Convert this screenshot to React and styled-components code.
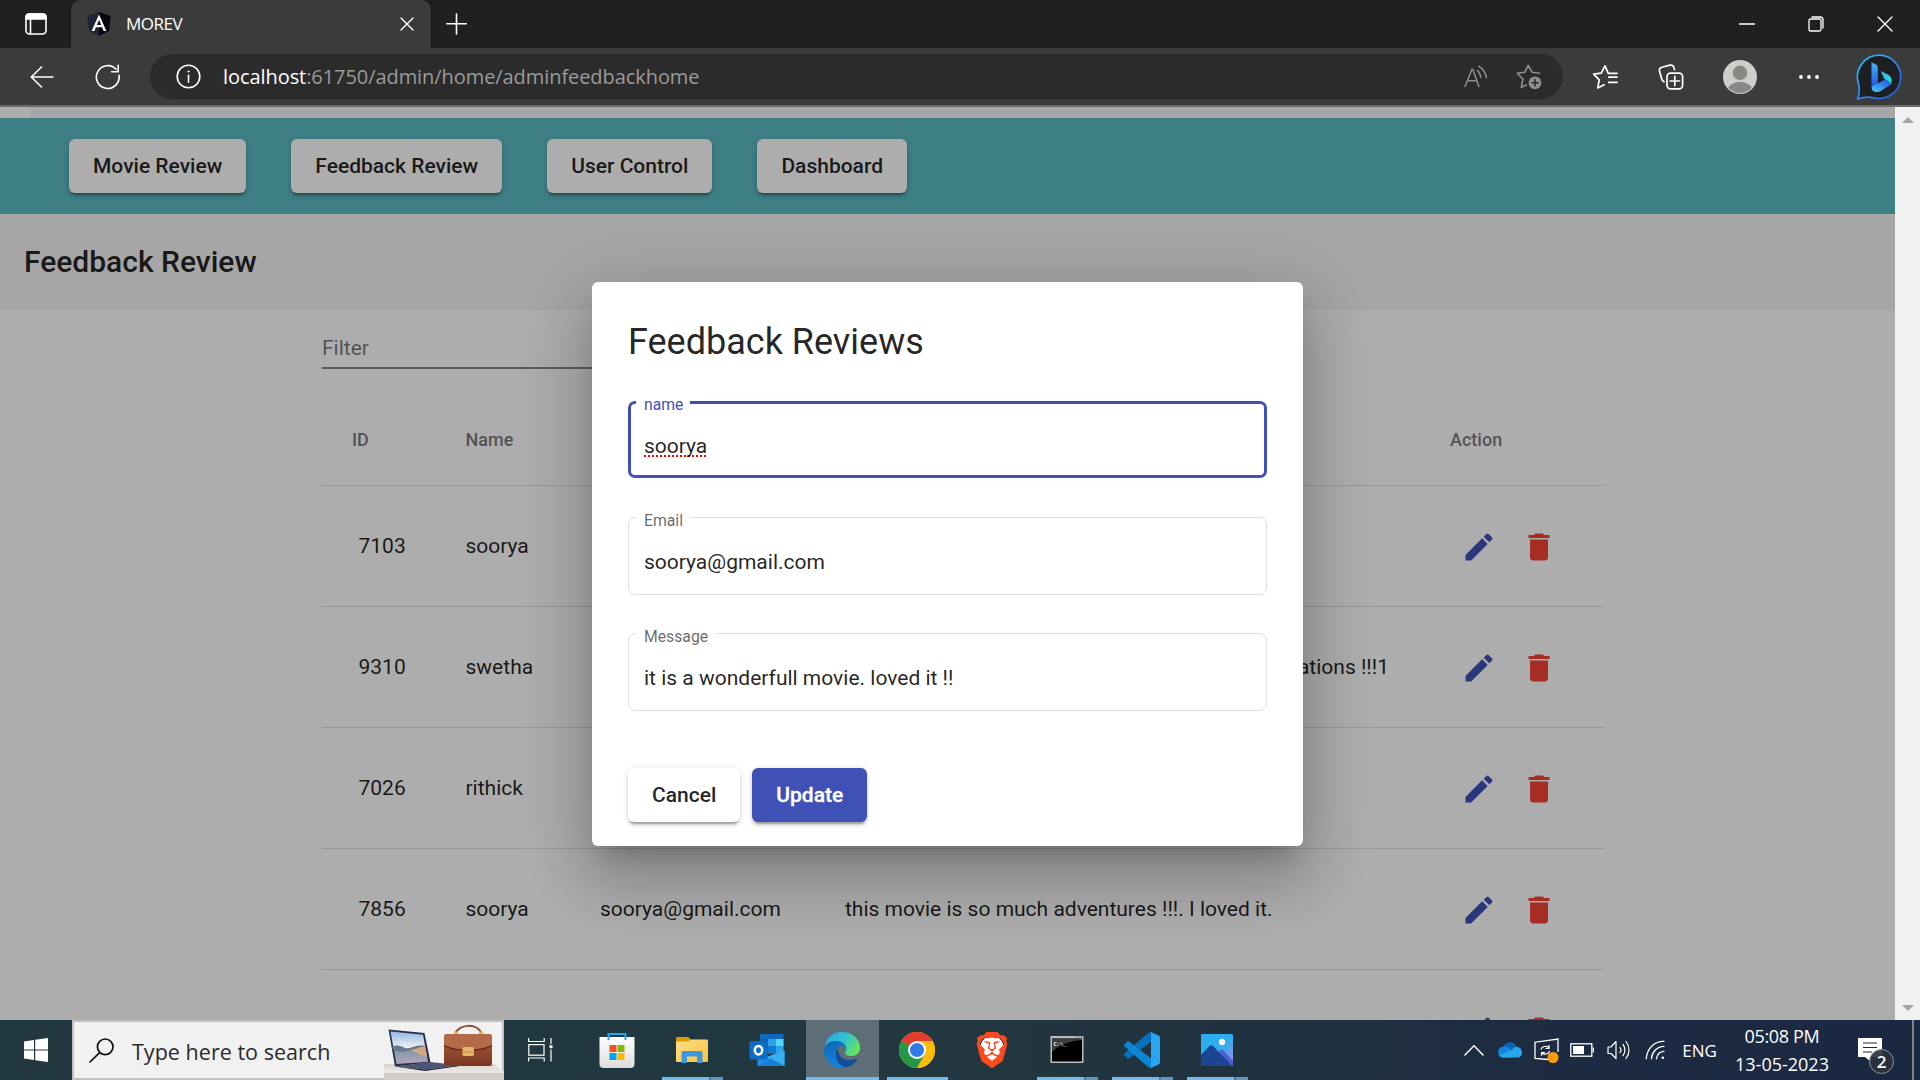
import React from "react";
import styled, { createGlobalStyle, css } from "styled-components";
import { SiBrave } from "react-icons/si";

const ui = `"Open Sans", "Noto Sans", sans-serif`;

const GlobalStyle = createGlobalStyle`
  * { box-sizing: border-box; }
  body { margin: 0; background: #202020; overflow: hidden; }
  svg { display: block; flex: none; }
`;

const Screen = styled.div`
  width: 1920px;
  height: 1080px;
  display: flex;
  flex-direction: column;
  overflow: hidden;
  font-family: Roboto, sans-serif;
`;

const Slot = styled.div`
  width: ${(p) => p.$w}px;
  height: 100%;
  flex: none;
  display: flex;
  align-items: center;
  justify-content: center;
  padding-right: ${(p) => p.$pr || 0}px;
`;

/* ---------- browser chrome ---------- */

const TabStrip = styled.div`
  height: 48px;
  flex: none;
  display: flex;
  background: #202020;
  color: #fff;
`;

const Tab = styled.div`
  width: 360px;
  padding: 0 17px 0 16px;
  display: flex;
  align-items: center;
  gap: 15px;
  background: #3b3b3b;
  border-radius: 9px 9px 0 0;
  box-shadow: 0 0 3px rgba(0, 0, 0, 0.6);
`;

const TabTitle = styled.span`
  flex: 1;
  font: 17px/24px ${ui};
  letter-spacing: -0.5px;
  padding-bottom: 1px;
`;

const WindowButtons = styled.div`
  margin-left: auto;
  display: flex;
`;

const Toolbar = styled.div`
  height: 59px;
  flex: none;
  display: flex;
  padding-left: 9px;
  background: #3b3b3b;
  border-bottom: 2px solid #6b6b6b;
  color: #fff;
`;

const AddressBar = styled.div`
  width: 1413px;
  height: 45px;
  margin: 6px 9px 0;
  padding: 0 8px 0 15px;
  display: flex;
  align-items: center;
  border-radius: 23px;
  background: #2b2b2b;
`;

const Url = styled.div`
  flex: 1;
  padding-left: 10px;
  font: 20px/28px ${ui};
  letter-spacing: -0.07px;
  color: #9a9a9a;
  b { font-weight: 400; color: #fff; }
`;

/* ---------- web page ---------- */

const Viewport = styled.div`
  height: 913px;
  flex: none;
  display: flex;
`;

const Page = styled.div`
  width: 1895px;
  position: relative;
  overflow: hidden;
  background: #fff;
  color: rgba(0, 0, 0, 0.87);
`;

const ScrollTrack = styled.div`
  flex: 1;
  display: flex;
  flex-direction: column;
  justify-content: space-between;
  align-items: center;
  padding: 10px 0 9px;
  background: #f1f1f1;
`;

const TopStrip = styled.div`
  height: 11px;
  margin-left: 30px;
  background: #f6f7fa;
`;

const NavBar = styled.nav`
  height: 96px;
  padding-left: 69px;
  display: flex;
  align-items: center;
  gap: 45px;
  background: #5abbc4;
`;

const Button = styled.button`
  height: 54px;
  padding: 0 24px;
  border: 0;
  border-radius: 6px;
  font: 500 21px/54px Roboto, sans-serif;
  white-space: nowrap;
  color: rgba(0, 0, 0, 0.87);
  background: #fff;
  box-shadow: 0 4.5px 1.5px -3px rgba(0, 0, 0, 0.2), 0 3px 3px rgba(0, 0, 0, 0.14),
    0 1.5px 7.5px rgba(0, 0, 0, 0.12);
  ${(p) =>
    p.$primary &&
    css`
      color: #fff;
      background: #3f51b5;
      -webkit-text-stroke: 0.3px #fff;
    `}
`;

const PageHeader = styled.header`
  height: 96px;
  padding: 0 0 2px 24px;
  display: flex;
  align-items: center;
  font-size: 30px;
  font-weight: 500;
  background: #f5f5f5;
`;

const Content = styled.main`
  width: 1283px;
  margin-left: 322px;
`;

const Filter = styled.div`
  width: 540px;
  height: 59px;
  padding-top: 18px;
  display: flex;
  align-items: center;
  font-size: 21px;
  color: rgba(0, 0, 0, 0.54);
  border-bottom: 2px solid rgba(0, 0, 0, 0.46);
`;

const Row = styled.div`
  height: 121px;
  display: grid;
  grid-template-columns: 143.5px 134.5px 245px 605px 1fr;
  align-items: center;
  border-bottom: 1px solid rgba(0, 0, 0, 0.12);
  font-size: 21px;
  white-space: nowrap;
`;

const HeadRow = styled(Row)`
  height: 91px;
  margin-top: 26px;
  padding-bottom: 2px;
  font-size: 18px;
  font-weight: 500;
  color: rgba(0, 0, 0, 0.54);
`;

const Cell = styled.div`
  padding-left: ${(p) => p.$indent || 0}px;
`;

const Actions = styled.div`
  display: flex;
  gap: 24px;
  padding: 2px 0 0 11px;
`;

const Backdrop = styled.div`
  position: absolute;
  inset: 0;
  display: flex;
  align-items: flex-start;
  justify-content: center;
  padding-top: 175px;
  background: rgba(0, 0, 0, 0.32);
`;

const Dialog = styled.div`
  width: 711px;
  height: 564px;
  padding: 36px;
  border-radius: 6px;
  background: #fff;
  box-shadow: 0 16.5px 22.5px -10.5px rgba(0, 0, 0, 0.2), 0 36px 57px 4.5px rgba(0, 0, 0, 0.14),
    0 13.5px 69px 12px rgba(0, 0, 0, 0.12);
`;

const DialogTitle = styled.h1`
  margin: 0 0 35px;
  font-size: 36px;
  font-weight: 400;
  line-height: 48px;
`;

const Field = styled.div`
  position: relative;
  height: ${(p) => (p.$focused ? 77 : 78)}px;
  margin-bottom: ${(p) => (p.$focused ? 39 : 38)}px;
  padding: ${(p) => (p.$focused ? "13px 13px 0" : "12px 15px 0")};
  display: flex;
  align-items: center;
  border: ${(p) => (p.$focused ? "3px solid #3f51b5" : "1px solid #dfdfdf")};
  border-radius: 7px;
  font-size: 21px;
`;

const Label = styled.label`
  position: absolute;
  left: ${(p) => (p.$focused ? 5 : 7)}px;
  top: ${(p) => (p.$focused ? -9 : -7)}px;
  padding: 0 7px 0 8px;
  min-width: 54px;
  background: #fff;
  font-size: 15.75px;
  line-height: 20px;
  color: ${(p) => (p.$focused ? "#3f51b5" : "rgba(0,0,0,.6)")};
`;

const Value = styled.span`
  line-height: 24px;
  ${(p) =>
    p.$misspelt &&
    css`
      text-decoration: underline dotted #f00 2px;
      text-decoration-skip-ink: none;
      text-underline-offset: 2px;
    `}
`;

const DialogActions = styled.div`
  display: flex;
  gap: 12px;
  margin-top: 57px;
`;

/* ---------- taskbar ---------- */

const Taskbar = styled.div`
  height: 60px;
  flex: none;
  display: flex;
  align-items: stretch;
  color: #fff;
  font-family: ${ui};
  background: linear-gradient(90deg, #21383f 0%, #22373f 50%, #1f3040 70%, #1c2a42 85%, #1b2841 100%);
`;

const SearchBox = styled.div`
  width: 432px;
  display: flex;
  align-items: center;
  padding-left: 15px;
  border: 2px solid #c0c0c0;
  background: #f1f1f1;
  color: #2b2b2b;
`;

const SearchText = styled.span`
  flex: 1;
  padding: 2px 0 0 18px;
  font-size: 21.5px;
  letter-spacing: 0.03px;
  white-space: nowrap;
`;

const Art = styled.div`
  margin: -2px -2px -2px 0;
`;

const Apps = styled.div`
  display: flex;
  gap: 2px;
  margin-left: 5px;
`;

const AppSlot = styled.div`
  width: 73px;
  display: flex;
  flex-direction: column;
  align-items: center;
  justify-content: space-between;
  padding-top: 12px;
  background: ${(p) => (p.$active ? "#5e6e76" : "transparent")};
`;

const AppGlyph = styled.div`
  margin-right: 2px;
`;

const Running = styled.div`
  height: 3px;
  width: ${(p) => (p.$kind === "active" ? 73 : 61)}px;
  background: ${(p) =>
    p.$kind === "stack"
      ? "linear-gradient(90deg, #76b9ed 47px, #4c7796 47px, #4c7796 49px, #6196c0 49px)"
      : p.$kind
        ? "#76b9ed"
        : "transparent"};
`;

const Tray = styled.div`
  margin-left: auto;
  display: flex;
`;

const Lang = styled.span`
  font-size: 17px;
  letter-spacing: -0.1px;
`;

const Clock = styled.div`
  width: 110px;
  display: flex;
  flex-direction: column;
  align-items: center;
  padding-top: 2px;
  font-size: 18px;
  line-height: 28px;
  white-space: nowrap;
`;

const Time = styled.span`
  letter-spacing: -0.35px;
`;

const Notify = styled.div`
  width: 75px;
  position: relative;
  padding: 18px 0 0 21px;
`;

const Badge = styled.span`
  position: absolute;
  left: 32px;
  top: 29px;
  width: 25px;
  height: 25px;
  border: 1px solid #8a8f97;
  border-radius: 50%;
  background: rgba(45, 50, 58, 0.92);
  font-size: 17px;
  font-weight: 600;
  line-height: 23px;
  text-align: center;
`;

const ShowDesktop = styled.div`
  width: 8px;
  border-left: 2px solid #7d8490;
`;

/* ---------- icons ---------- */

const Line = ({ w = 24, h = 24, sw = 1.6, color = "currentColor", children }) => (
  <svg width={w} height={h} viewBox={`0 0 ${w} ${h}`} fill="none" stroke={color} strokeWidth={sw} strokeLinecap="round" strokeLinejoin="round">
    {children}
  </svg>
);

const TabActionsIcon = () => (
  <Line w={22} h={22}>
    <rect x="1" y="1" width="20" height="20" rx="3.5" />
    <path d="M1 5V4a3 3 0 0 1 3-3h14a3 3 0 0 1 3 3v2H1z" fill="currentColor" />
    <path d="M5.5 6v15" />
  </Line>
);

const AngularIcon = () => (
  <svg width="24" height="24" viewBox="0 0 24 24">
    <path d="M12 0 0.2 4l1.8 15L12 24z" fill="#1d2535" />
    <path d="M12 0l11.8 4L22 19l-10 5z" fill="#05070f" />
    <path d="M12 2.6 4.6 19h2.8l1.5-3.7h6.2l1.5 3.7h2.8zm2.2 10.5H9.8L12 7.8z" fill="#fff" />
  </svg>
);

const CloseIcon = ({ s = 14 }) => (
  <Line w={s} h={s} sw={1.4}>
    <path d={`M1 1 ${s - 1} ${s - 1}M${s - 1} 1 1 ${s - 1}`} />
  </Line>
);

const PlusIcon = () => (
  <Line w={21} h={22}>
    <path d="M10.5 1v20M.8 10.7h19.4" />
  </Line>
);

const RestoreIcon = () => (
  <Line w={16} h={16} sw={1.3}>
    <rect x="1" y="3" width="12" height="12" rx="1.5" />
    <path d="M4 1h8.5A2.5 2.5 0 0 1 15 3.5V12" />
  </Line>
);

const BackIcon = () => (
  <Line w={24} h={22} sw={1.6}>
    <path d="M11.5 1 1.3 11l10.2 10M1.5 11H23" />
  </Line>
);

const ReloadIcon = () => (
  <Line w={26} h={26} sw={1.6}>
    <path d="M24 11.2A11.4 11.4 0 1 1 21 5.2M23.2 1.2v6.6h-6.6" />
  </Line>
);

const InfoIcon = () => (
  <Line w={25} h={25} sw={1.6}>
    <circle cx="12.5" cy="12.5" r="11.3" />
    <path d="M12.5 11.3v7" />
    <circle cx="12.5" cy="7.6" r=".6" fill="currentColor" strokeWidth="1" />
  </Line>
);

const ReadAloudIcon = () => (
  <Line w={24} h={24} color="#8f8f8f" sw={1.5}>
    <path d="M1 21.5 7.900 4.500h1l6 17M3.800 15.800h8.500M13.500 5.500c2 1.800 3 4 3.200 7M14.500 1.200c4.500 2.500 7 6.500 8 11.500" />
  </Line>
);

const StarAddIcon = () => (
  <Line w={26} h={26} color="#8f8f8f">
    <path d="M23.800 9.200 16 8.200 12.200 1.300 8.800 8.200 1.200 9.200l5.700 5.800-1.500 8.400 5-2.400" />
    <circle cx="19" cy="18.800" r="6.400" fill="#8f8f8f" stroke="none" />
    <path d="M19 15.600v6.400M15.800 18.800h6.400" stroke="#2b2b2b" />
  </Line>
);

const FavoritesIcon = () => (
  <Line w={26} h={26} sw={1.7}>
    <path d="M22 9.300h-5.700L13 1.800 9.300 9.200 1.600 10.100l5.600 5.800-1.400 8 6.400-3.100M16.800 13.200H25M16.800 9.300H25M16.800 18.400H25" />
  </Line>
);

const CollectionsIcon = () => (
  <Line w={26} h={26} sw={1.7}>
    <rect x="9" y="9.200" width="15.600" height="15.600" rx="3.500" />
    <path d="M16.800 12.400v9.200M12.200 17h9.200M6 17.800C4.500 17 3.700 15.600 3.300 13.800L1.500 7A3.300 3.300 0 0 1 3.900 3.200L12 1.200a3.300 3.300 0 0 1 4 2.400l.5 2" />
  </Line>
);

const AvatarIcon = () => (
  <svg width="34" height="34" viewBox="0 0 34 34">
    <clipPath id="face"><circle cx="17" cy="17" r="16" /></clipPath>
    <circle cx="17" cy="17" r="17" fill="#d0cecb" />
    <g clipPath="url(#face)" fill="#8b8785">
      <circle cx="17" cy="12.800" r="7.300" />
      <ellipse cx="17" cy="31" rx="12.500" ry="9.300" />
    </g>
  </svg>
);

const DotsIcon = () => (
  <svg width="22" height="6" viewBox="0 0 22 6" fill="#fff">
    <circle cx="3" cy="3" r="1.900" /><circle cx="11" cy="3" r="1.900" /><circle cx="19" cy="3" r="1.900" />
  </svg>
);

const BingIcon = () => (
  <svg width="46" height="46" viewBox="0 0 46 46">
    <defs>
      <linearGradient id="bingRing" x1="0" y1="0" x2="1" y2="1">
        <stop offset="0" stopColor="#22c6f5" /><stop offset=".5" stopColor="#2f8cf5" /><stop offset="1" stopColor="#1f50e0" />
      </linearGradient>
      <linearGradient id="bingStem" x1="0" y1="0" x2="0" y2="1">
        <stop offset="0" stopColor="#3fb4fa" /><stop offset="1" stopColor="#1c4fe6" />
      </linearGradient>
      <linearGradient id="bingLeaf" x1="0" y1="0" x2="1" y2="1">
        <stop offset="0" stopColor="#35b7f7" /><stop offset="1" stopColor="#22e3c9" />
      </linearGradient>
      <linearGradient id="bingFoot" x1="1" y1="0" x2="0" y2="1">
        <stop offset="0" stopColor="#2246df" /><stop offset="1" stopColor="#45cdfb" />
      </linearGradient>
    </defs>
    <path d="M23 1.200a21.600 21.600 0 1 1-5 42.600c-6-1.300-11-.6-16.300 1.100C3.700 39 3.800 35 2.600 30A21.800 21.800 0 0 1 23 1.200z" fill="#1d1f23" stroke="url(#bingRing)" strokeWidth="1.700" />
    <path d="M15.500 8.200 20 10.500a3 3 0 0 1 1.800 2.800V31l-6.300 3.200z" fill="url(#bingStem)" />
    <path d="M15.500 33 29 25.500c4-1.500 7 1.500 5.800 5L24.500 37.200c-4.500 2.200-9 .3-9-4.200z" fill="url(#bingFoot)" />
    <path d="M24.800 17l7 3.400c3.500 1.800 5 5.500 3 10.100-.8-2.300-2-3.500-4.300-4.500l-2.300-1.200z" fill="url(#bingLeaf)" />
  </svg>
);

const EditIcon = () => (
  <svg width="36" height="36" viewBox="0 0 24 24" fill="#3f51b5">
    <path d="M3 17.250V21h3.750L17.810 9.940l-3.750-3.750L3 17.250zM20.710 7.040a.996.996 0 0 0 0-1.410l-2.340-2.340a.996.996 0 0 0-1.410 0l-1.830 1.830 3.750 3.750 1.830-1.830z" />
  </svg>
);

const DeleteIcon = () => (
  <svg width="36" height="36" viewBox="0 0 24 24" fill="#f44336">
    <path d="M6 19c0 1.100.9 2 2 2h8c1.100 0 2-.9 2-2V7H6v12zM19 4h-3.500l-.7-.7c-.2-.2-.45-.3-.7-.3H9.900c-.25 0-.5.1-.7.3l-.7.7H5v2h14V4z" />
  </svg>
);

const ScrollArrow = ({ down }) => (
  <svg width="12" height="6" viewBox="0 0 12 6" fill="#a3a3a3">
    <path d={down ? "M0 0h12L6 6z" : "M0 6h12L6 0z"} />
  </svg>
);

const WindowsIcon = () => (
  <svg width="24" height="24" viewBox="0 0 24 24" fill="#fff">
    <path d="M0 3.400 10 2v9.400H0zM11.200 1.800 24 0v11.400H11.200zM0 12.600h10V22L0 20.600zM11.200 12.600H24V24l-12.800-1.800z" />
  </svg>
);

const SearchIcon = () => (
  <Line w={25} h={25} sw={1.700} color="#111">
    <circle cx="16.200" cy="8.800" r="7.800" /><path d="M10.600 14.600 1 24" />
  </Line>
);

const SearchArt = () => (
  <svg width="134" height="60" viewBox="0 0 134 60">
    <defs>
      <linearGradient id="sky" x1="0" y1="0" x2="0" y2="1">
        <stop offset="0" stopColor="#8fb9e6" /><stop offset=".5" stopColor="#f3efee" /><stop offset=".55" stopColor="#7e95aa" /><stop offset="1" stopColor="#b5a8bb" />
      </linearGradient>
      <linearGradient id="bag" x1="0" y1="0" x2="0" y2="1">
        <stop offset="0" stopColor="#a9603f" /><stop offset="1" stopColor="#7c3623" />
      </linearGradient>
      <linearGradient id="desk" x1="0" y1="0" x2="0" y2="1">
        <stop offset="0" stopColor="#d8d1cb" /><stop offset=".4" stopColor="#eae6e2" /><stop offset=".45" stopColor="#cfc7c0" /><stop offset="1" stopColor="#dcd6d1" />
      </linearGradient>
    </defs>
    <path d="M14 44h110l10 9v7H14z" fill="url(#desk)" />
    <path d="M14 51h120v2H14z" fill="#ebe7e3" />
    <path d="M14 53h120v7H14z" fill="#d3cbc5" />
    <path d="M18.500 9.500 54.500 13l6 29.500-35.500 4z" fill="#2b3048" />
    <path d="M20.500 11.500 53 14.800 58 41.800 26.500 44z" fill="url(#sky)" />
    <path d="M22 27c5-3 9-1 13 1s10-4 20-2l1.500 7c-9 1-14-3-20-2-5 1-9 1-13-1z" fill="#64798c" />
    <path d="M39 30c6 0 9-3 16-3.500l2.200 10C50 36 47 32 39 30z" fill="#d6a783" />
    <path d="M25 46.500 60.500 42l28 3.200L55 49.500z" fill="#4e5573" />
    <path d="M25 46.500 55 49.500l34-4.300-1 1L55 51z" fill="#1f2336" />
    <path d="M85 14.500c3-11 23-12 27 0" fill="none" stroke="#8f4a31" strokeWidth="2" />
    <path d="M84 11.500h4v4h-4zM109 11.500h4v4h-4z" fill="#dfb16a" />
    <rect x="74" y="14" width="48" height="32" rx="2.500" fill="url(#bag)" />
    <path d="M74 17c0-2 1-3 3-3h42c2 0 3 1 3 3v8c-14 6-34 6-48 0z" fill="#b26a48" />
    <path d="M74 25c14 6.500 34 6.500 48 0v1.200c-14 6.500-34 6.500-48 0z" fill="#5f2818" />
    <rect x="92.500" y="27" width="11.500" height="9" rx="1.500" fill="#e6b568" />
    <path d="M92.500 31.500h11.500v1h-11.500z" fill="#c48d45" />
  </svg>
);

const TaskViewIcon = () => (
  <svg width="25" height="24" viewBox="0 0 25 24" fill="none" stroke="#fff" strokeWidth="1.200">
    <rect x=".8" y="6.600" width="15.200" height="10.600" />
    <path d="M.6 0v3.500h15.600V0M.6 23.500V20h15.600v3.500M23 0v6M23 11.500v12" />
    <path d="M21.500 7.200h3v3h-3z" fill="#fff" stroke="none" />
  </svg>
);

const App36 = ({ children }) => (
  <svg width="36" height="36" viewBox="0 0 36 36">{children}</svg>
);

const StoreIcon = () => (
  <App36>
    <defs><linearGradient id="st" x1="0" y1="0" x2="0" y2="1"><stop offset="0" stopColor="#fff" /><stop offset="1" stopColor="#dcdcdc" /></linearGradient></defs>
    <path d="M.5 5h35v27a4 4 0 0 1-4 4h-27a4 4 0 0 1-4-4z" fill="url(#st)" />
    <path d="M9.500 8V2h17v6" fill="none" stroke="#1fa8ee" strokeWidth="2" />
    <path d="M10.500 13h7v7h-7z" fill="#f25022" /><path d="M18.500 13h7v7h-7z" fill="#7fba00" />
    <path d="M10.500 21h7v7h-7z" fill="#00a4ef" /><path d="M18.500 21h7v7h-7z" fill="#ffb900" />
  </App36>
);

const ExplorerIcon = () => (
  <App36>
    <defs><linearGradient id="ex" x1="0" y1="0" x2="1" y2="1"><stop offset="0" stopColor="#ffe08a" /><stop offset="1" stopColor="#fbc33c" /></linearGradient></defs>
    <path d="M2 6.500A1.500 1.500 0 0 1 3.500 5h11l2 2.500V12H2z" fill="#dd9b06" />
    <path d="M2 9.500h12.500l2-2H33a1 1 0 0 1 1 1V29a1 1 0 0 1-1 1H3a1 1 0 0 1-1-1z" fill="url(#ex)" />
    <path d="M7.500 31V20.500a1.500 1.500 0 0 1 1.500-1.500h18a1.500 1.500 0 0 1 1.500 1.500V31H23v-6.500H13V31z" fill="#3f97df" />
  </App36>
);

const OutlookIcon = () => (
  <App36>
    <path d="M11 2h23.500v20H11z" fill="#0f68bd" />
    <path d="M11 7h8v8h-8z" fill="#0f5fae" /><path d="M19 7h8v7h-8z" fill="#2e9fe6" /><path d="M27 7h7.500v7H27z" fill="#50d9ff" />
    <path d="M19 14h8v7h-8z" fill="#1376cf" /><path d="M27 14h7.500v7H27z" fill="#2ea2ea" />
    <path d="M8.500 19 22 27l13.500-8.500V34h-27z" fill="#1f8fe4" />
    <path d="M35.500 18.500V34L17 25z" fill="#36b0f2" /><path d="M8.500 34 22 26.500 35.500 34z" fill="#1a7fd6" />
    <rect x=".5" y="9" width="18" height="18.500" rx="1.500" fill="#0f6cc6" />
    <ellipse cx="9.500" cy="18.200" rx="3.700" ry="4.300" fill="none" stroke="#fff" strokeWidth="2.500" />
  </App36>
);

const EdgeIcon = () => (
  <App36>
    <defs>
      <linearGradient id="e1" x1="0" y1=".3" x2="1" y2=".7"><stop offset="0" stopColor="#2aa9e0" /><stop offset=".5" stopColor="#33c3cf" /><stop offset="1" stopColor="#66ea4e" /></linearGradient>
      <linearGradient id="e2" x1="0" y1="0" x2=".4" y2="1"><stop offset="0" stopColor="#0f63b4" /><stop offset="1" stopColor="#1187df" /></linearGradient>
    </defs>
    <path d="M.6 15C2 6 9 0 18 0c10.500 0 18 7.500 18 15.500 0 5.500-4 8.500-8.500 8.500-4 0-6.500-1.500-6.500-3 0-1 1.300-1.600 1.300-4.500C22.300 12 17 9 11.500 9 6 9 2 11.500.6 15z" fill="url(#e1)" />
    <path d="M0 18C.5 12.500 5.500 9 11.500 9c6 0 10.800 3.500 10.800 7.500-1.300-2-3.300-2.700-5.300-2.500-3.500.500-5.500 3.500-5.500 7.500 0 6 4 12 11 13.700C11.500 38.500 0 30 0 18z" fill="url(#e2)" />
    <path d="M14 16.500c-5.500 7-.5 18 8.500 18.700 4.500-.9 8.500-4 10.700-8 .3-.7-.3-1-.9-.7-6.300 3-15.300 1.500-17.500-5-.5-1.500-.8-3-.8-5z" fill="#124d97" />
  </App36>
);

const ChromeIcon = () => (
  <App36>
    <circle cx="18" cy="18" r="18" fill="#fbbc0a" />
    <path d="M18 18 2.410 9A18 18 0 0 1 33.590 9z" fill="#e33b2e" />
    <path d="M2.410 9A18 18 0 0 0 18 36l7.800-13.500L18 18z" fill="#249645" />
    <path d="M18 9h15.590A18 18 0 0 1 18 36l7.800-13.500z" fill="#fbbc0a" />
    <circle cx="18" cy="18" r="9" fill="#fff" /><circle cx="18" cy="18" r="7.100" fill="#2f7bea" />
  </App36>
);

const BraveBox = styled.div`
  width: 36px;
  height: 36px;
  display: flex;
  justify-content: center;
  color: #fb4a1d;
  background: radial-gradient(ellipse 12px 14px at 50% 48%, #fff 97%, transparent 100%);
`;

const CmdText = styled.text`
  font: bold 5.500px "Liberation Mono", monospace;
`;

const CmdIcon = () => (
  <App36>
    <rect x="1.500" y="4" width="33" height="27" fill="#b7bcc0" />
    <rect x="3" y="6.500" width="30" height="23" fill="#000" />
    <path d="M3 6.500h30V8C20 9 10 13 3 20z" fill="#3c3c3c" />
    <path d="M26 4.500h1.500v1H26zM29 4.500h1.500v1H29zM32 4.500h1.500v1H32z" fill="#4f6f8f" />
    <CmdText x="4.500" y="13.500" fill="#f0f0f0">C:\_</CmdText>
  </App36>
);

const VsCodeIcon = () => (
  <App36>
    <path d="M27 0v9.800L5.300 26.300c-.7.500-1.500.5-2.100 0L.7 24c-.8-.8-.8-2 0-2.700L24.500.700z" fill="#0b70bb" />
    <path d="M27 36v-9.800L5.300 9.700c-.7-.5-1.500-.5-2.100 0L.7 12c-.8.800-.8 2 0 2.700l23.800 20.600z" fill="#0c85d3" />
    <path d="M27 0l7.500 3.500c.9.400 1.500 1.200 1.500 2.200v24.600c0 1-.6 1.800-1.500 2.200L27 36z" fill="#28a6f2" />
  </App36>
);

const PhotosIcon = () => (
  <App36>
    <defs><linearGradient id="ph" x1="0" y1="0" x2="1" y2="1"><stop offset="0.500" stopColor="#2badee" /><stop offset="1" stopColor="#a58be8" /></linearGradient></defs>
    <rect x="2" y="2" width="32" height="32" rx="1" fill="url(#ph)" />
    <path d="M18 22l3-3.500c1-1 2.500-1 3.500 0L34 29v5H20z" fill="#4b5fd0" />
    <path d="M2 23l8.500-9c1-1 2.500-1 3.500 0l19 20H3a1 1 0 0 1-1-1z" fill="#1b4591" />
    <circle cx="23" cy="10" r="3.200" fill="#f6f6f6" />
  </App36>
);

const ChevronIcon = () => <Line w={20} h={12} sw={1.500}><path d="M1 11 10 1.800 19 11" /></Line>;

const OneDriveIcon = () => (
  <svg width="24" height="16" viewBox="0 0 24 16">
    <path d="M5 6A7 7 0 0 1 18.500 5L14 11z" fill="#0a62ba" />
    <path d="M5.500 4.800C9 3.500 11 6 19 11l-5 4.500H4.500A5.400 5.400 0 0 1 5.500 4.800z" fill="#1384dc" />
    <path d="M14 8c2-3 4-3.500 5.500-3 3 .5 4.500 3 4.500 5.500 0 3-2 5-4.500 5H5c-1.500 0-3-.8-3.900-2.200z" fill="#29a7ee" />
  </svg>
);

const SyncIcon = () => (
  <svg width="25" height="25" viewBox="0 0 25 25" fill="none" stroke="#fff" strokeWidth="1.300">
    <path d="M14 21.500 1 20.500V4.200L24 1v13" />
    <path d="M7 11.500c.5-3 5.500-4.500 8-1.500m0-3v3.500h-3.500M15.500 13c-.5 3-5.500 4.500-8 1.500m0 3.200v-3.200H11" strokeWidth="1.200" />
    <circle cx="19" cy="19.500" r="5.500" fill="#ff9a0a" stroke="none" />
  </svg>
);

const BatteryIcon = () => (
  <svg width="24" height="14" viewBox="0 0 24 14" fill="none" stroke="#fff" strokeWidth="1.300">
    <rect x=".8" y=".8" width="21" height="12.400" /><path d="M23.300 4.500v5" />
    <path d="M3 3h11v8H3z" fill="#fff" stroke="none" />
  </svg>
);

const VolumeIcon = () => (
  <Line w={23} h={20} sw={1.200}>
    <path d="M1 7v6.500h3L9 18.500V1.500L4 7zM13 7.500c1.200 1.500 1.200 3.500 0 5M16 4.500c2.500 3 2.500 8 0 11M19 1.500c4 5 4 12 0 17" />
  </Line>
);

const WifiIcon = () => (
  <Line w={20} h={20} sw={1.300}>
    <path d="M19 1.200C9 1.500 2 8.500 1.200 18.800M19 6.300c-7 .3-12 5.500-12.600 12.500M19 11.300c-4.500.3-7 3.500-7.600 7.500" />
    <circle cx="17.800" cy="17.800" r="1.300" fill="#fff" stroke="none" />
  </Line>
);

const NotifyIcon = () => (
  <svg width="24" height="25" viewBox="0 0 24 25">
    <path d="M0 0h24v19H13v5l-6-5H0z" fill="#fff" />
    <path d="M5 5h14M5 9.500h14M5 14h9" stroke="#1b2841" strokeWidth="1.200" />
  </svg>
);

/* ---------- data ---------- */

const NAV = ["Movie Review", "Feedback Review", "User Control", "Dashboard"];

const ROWS = [
  ["7103", "soorya", "soorya@gmail.com", "it is a wonderfull movie. loved it !!"],
  ["9310", "swetha", "swetha@gmail.com", "this movie was a good one. it reached my expectations !!!1"],
  ["7026", "rithick", "rithick@gmail.com", "nice movie"],
  ["7856", "soorya", "soorya@gmail.com", "this movie is so much adventures !!!. I loved it."],
  ["", "", "", ""],
];

const FIELDS = [
  { label: "name", value: "soorya", focused: true },
  { label: "Email", value: "soorya@gmail.com" },
  { label: "Message", value: "it is a wonderfull movie. loved it !!" },
];

const APPS = [
  { icon: <StoreIcon /> },
  { icon: <ExplorerIcon />, run: "stack" },
  { icon: <OutlookIcon /> },
  { icon: <EdgeIcon />, run: "active" },
  { icon: <ChromeIcon />, run: "single" },
  { icon: <BraveBox><SiBrave size={36} /></BraveBox> },
  { icon: <CmdIcon />, run: "stack" },
  { icon: <VsCodeIcon />, run: "stack" },
  { icon: <PhotosIcon />, run: "stack" },
];

export default function App() {
  return (
    <Screen>
      <GlobalStyle />
      <TabStrip>
        <Slot $w={71}><TabActionsIcon /></Slot>
        <Tab>
          <AngularIcon />
          <TabTitle>MOREV</TabTitle>
          <CloseIcon s={14} />
        </Tab>
        <Slot $w={51}><PlusIcon /></Slot>
        <WindowButtons>
          <Slot $w={69} $pr={1}><Line w={16} h={2} sw={1.3}><path d="M.5 1h15" /></Line></Slot>
          <Slot $w={69} $pr={1}><RestoreIcon /></Slot>
          <Slot $w={69} $pr={1}><CloseIcon s={16} /></Slot>
        </WindowButtons>
      </TabStrip>
      <Toolbar>
        <Slot $w={66}><BackIcon /></Slot>
        <Slot $w={66}><ReloadIcon /></Slot>
        <AddressBar>
          <Slot $w={48} $pr={1}><InfoIcon /></Slot>
          <Url><b>localhost</b>:61750/admin/home/adminfeedbackhome</Url>
          <Slot $w={53}><ReadAloudIcon /></Slot>
          <Slot $w={53}><StarAddIcon /></Slot>
        </AddressBar>
        <Slot $w={66}><FavoritesIcon /></Slot>
        <Slot $w={66}><CollectionsIcon /></Slot>
        <Slot $w={72}><AvatarIcon /></Slot>
        <Slot $w={66}><DotsIcon /></Slot>
        <Slot $w={76} $pr={2}><BingIcon /></Slot>
      </Toolbar>

      <Viewport>
        <Page>
          <TopStrip />
          <NavBar>{NAV.map((n) => <Button key={n}>{n}</Button>)}</NavBar>
          <PageHeader>Feedback Review</PageHeader>
          <Content>
            <Filter>Filter</Filter>
            <HeadRow>
              <Cell $indent={30}>ID</Cell>
              <Cell>Name</Cell>
              <Cell>Email</Cell>
              <Cell>Message</Cell>
              <Cell>Action</Cell>
            </HeadRow>
            {ROWS.map(([id, name, email, message], i) => (
              <Row key={i}>
                <Cell $indent={36.5}>{id}</Cell>
                <Cell>{name}</Cell>
                <Cell>{email}</Cell>
                <Cell>{message}</Cell>
                <Actions><EditIcon /><DeleteIcon /></Actions>
              </Row>
            ))}
          </Content>
          <Backdrop>
            <Dialog>
              <DialogTitle>Feedback Reviews</DialogTitle>
              {FIELDS.map((f) => (
                <Field key={f.label} $focused={f.focused}>
                  <Label $focused={f.focused}>{f.label}</Label>
                  <Value $misspelt={f.focused}>{f.value}</Value>
                </Field>
              ))}
              <DialogActions>
                <Button>Cancel</Button>
                <Button $primary>Update</Button>
              </DialogActions>
            </Dialog>
          </Backdrop>
        </Page>
        <ScrollTrack><ScrollArrow /><ScrollArrow down /></ScrollTrack>
      </Viewport>

      <Taskbar>
        <Slot $w={72}><WindowsIcon /></Slot>
        <SearchBox>
          <SearchIcon />
          <SearchText>Type here to search</SearchText>
          <Art><SearchArt /></Art>
        </SearchBox>
        <Slot $w={72}><TaskViewIcon /></Slot>
        <Apps>
          {APPS.map((a, i) => (
            <AppSlot key={i} $active={a.run === "active"}>
              <AppGlyph>{a.icon}</AppGlyph>
              <Running $kind={a.run} />
            </AppSlot>
          ))}
        </Apps>
        <Tray>
          <Slot $w={36}><ChevronIcon /></Slot>
          <Slot $w={36}><OneDriveIcon /></Slot>
          <Slot $w={36}><SyncIcon /></Slot>
          <Slot $w={36}><BatteryIcon /></Slot>
          <Slot $w={36}><VolumeIcon /></Slot>
          <Slot $w={37}><WifiIcon /></Slot>
          <Slot $w={54} $pr={1}><Lang>ENG</Lang></Slot>
          <Clock><Time>05:08 PM</Time><span>13-05-2023</span></Clock>
          <Notify><NotifyIcon /><Badge>2</Badge></Notify>
          <ShowDesktop />
        </Tray>
      </Taskbar>
    </Screen>
  );
}
